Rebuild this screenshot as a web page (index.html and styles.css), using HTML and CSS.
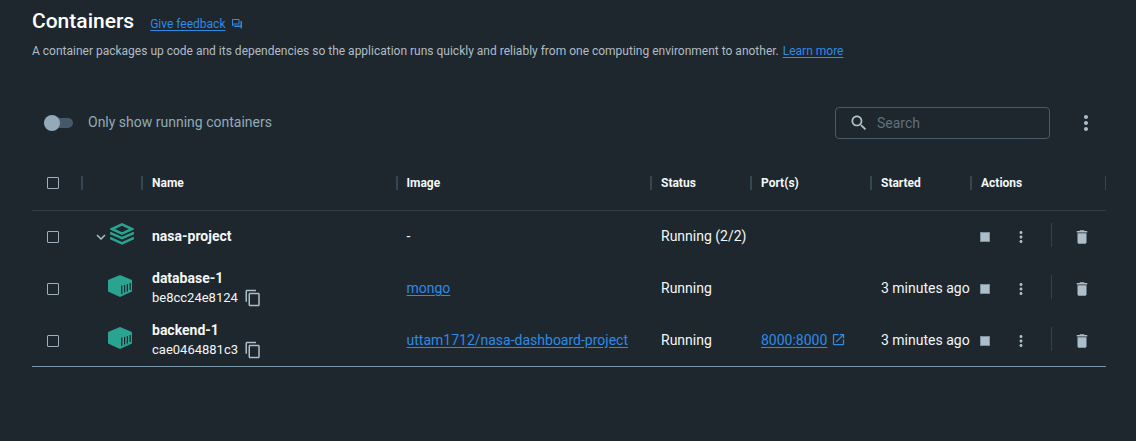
FILE: index.html
```html
<!DOCTYPE html>
<html lang="en">
<head>
<meta charset="utf-8">
<title>Containers</title>
<link rel="stylesheet" href="styles.css">
</head>
<body>
<svg class="sprite" aria-hidden="true">
  <symbol id="i-more" viewBox="0 0 24 24"><path d="M12 8c1.1 0 2-.9 2-2s-.9-2-2-2-2 .9-2 2 .9 2 2 2zm0 2c-1.100 0-2 .9-2 2s.9 2 2 2 2-.9 2-2-.9-2-2-2zm0 6c-1.100 0-2 .9-2 2s.9 2 2 2 2-.9 2-2-.9-2-2-2z"/></symbol>
  <symbol id="i-trash" viewBox="0 0 24 24"><path d="M6 19c0 1.100.9 2 2 2h8c1.100 0 2-.9 2-2V7H6v12zM19 4h-3.500l-1-1h-5l-1 1H5v2h14V4z"/></symbol>
  <symbol id="i-copy" viewBox="0 0 24 24"><path d="M16 1H4c-1.100 0-2 .9-2 2v14h2V3h12V1zm3 4H8c-1.100 0-2 .9-2 2v14c0 1.100.9 2 2 2h11c1.100 0 2-.9 2-2V7c0-1.100-.9-2-2-2zm0 16H8V7h11v14z"/></symbol>
  <symbol id="i-cube" viewBox="0 0 24 22"><path fill="currentColor" d="M12 0 24 5v11.500L12 22 0 16.500V5z"/><path class="slots" d="M13.800 10.500v8.500M16.600 10v7.500M19.400 9v7.500M22.200 8v7"/></symbol>
</svg>
<main class="page">
  <header class="heading">
    <h1 class="title">Containers</h1>
    <a class="link feedback" href="#feedback"><span class="underlined">Give feedback</span>
      <svg class="icon-feedback" viewBox="0 0 24 24" aria-hidden="true"><path d="M15 4v7H5.170L4 12.170V4h11m1-2H3c-.55 0-1 .45-1 1v14l4-4h10c.55 0 1-.45 1-1V3c0-.55-.45-1-1-1zm5 4h-2v9H6v2c0 .55.45 1 1 1h11l4 4V7c0-.55-.45-1-1-1z"/></svg>
    </a>
  </header>
  <p class="intro">A container packages up code and its dependencies so the application runs quickly and reliably from one computing environment to another. <a class="link underlined" href="#learn">Learn more</a></p>

  <div class="toolbar">
    <label class="toggle"><input class="switch" type="checkbox" role="switch"><span class="toggle-text">Only show running containers</span></label>
    <div class="search">
      <svg class="icon-search" viewBox="0 0 24 24" aria-hidden="true"><path d="M15.500 14h-.79l-.28-.27C15.410 12.590 16 11.110 16 9.500 16 5.910 13.090 3 9.500 3S3 5.910 3 9.500 5.910 16 9.500 16c1.610 0 3.090-.59 4.230-1.570l.27.28v.79l5 4.990L20.490 19l-4.990-5zm-6 0C7.010 14 5 11.990 5 9.500S7.010 5 9.500 5 14 7.010 14 9.500 11.990 14 9.500 14z"/></svg>
      <input class="search-input" type="search" placeholder="Search" aria-label="Search">
    </div>
    <button class="icon-button more" type="button" aria-label="Table options"><svg class="icon-more-large"><use href="#i-more"/></svg></button>
  </div>

  <table class="table">
    <colgroup><col class="col-check"><col class="col-icon"><col><col><col class="col-status"><col class="col-ports"><col class="col-started"><col class="col-actions"></colgroup>
    <thead>
      <tr>
        <th><input class="box" type="checkbox" aria-label="Select all"></th>
        <th></th><th>Name</th><th>Image</th><th>Status</th><th>Port(s)</th><th>Started</th><th>Actions</th>
      </tr>
    </thead>
    <tbody>
      <tr>
        <td><input class="box" type="checkbox" aria-label="Select nasa-project"></td>
        <td><div class="kind">
          <button class="icon-button" type="button" aria-label="Collapse"><svg class="icon-chevron" viewBox="0 0 10 6"><path d="M1 1l4 4 4-4"/></svg></button>
          <svg class="icon-stack" viewBox="0 0 24 22" aria-hidden="true"><path d="M12 1.400 22 6 12 10.600 2 6z"/><path d="M0 9.800 12 15.200l12-5.400M0 14.900 12 20.300l12-5.400"/></svg>
        </div></td>
        <td><div class="name">nasa-project</div></td>
        <td>-</td>
        <td>Running (2/2)</td>
        <td></td>
        <td></td>
        <td><div class="actions">
          <button class="icon-button" type="button" aria-label="Stop"><span class="stop"></span></button>
          <button class="icon-button" type="button" aria-label="More"><svg class="icon-action"><use href="#i-more"/></svg></button>
          <span class="divider"></span>
          <button class="icon-button" type="button" aria-label="Delete"><svg class="icon-trash"><use href="#i-trash"/></svg></button>
        </div></td>
      </tr>
      <tr>
        <td><input class="box" type="checkbox" aria-label="Select database-1"></td>
        <td><div class="kind"><svg class="icon-cube" aria-hidden="true"><use href="#i-cube"/></svg></div></td>
        <td><div class="name">database-1</div><div class="id">be8cc24e8124<button class="icon-button" type="button" aria-label="Copy ID"><svg class="icon-copy"><use href="#i-copy"/></svg></button></div></td>
        <td><a class="link underlined" href="#mongo">mongo</a></td>
        <td>Running</td>
        <td></td>
        <td>3 minutes ago</td>
        <td><div class="actions">
          <button class="icon-button" type="button" aria-label="Stop"><span class="stop"></span></button>
          <button class="icon-button" type="button" aria-label="More"><svg class="icon-action"><use href="#i-more"/></svg></button>
          <span class="divider"></span>
          <button class="icon-button" type="button" aria-label="Delete"><svg class="icon-trash"><use href="#i-trash"/></svg></button>
        </div></td>
      </tr>
      <tr>
        <td><input class="box" type="checkbox" aria-label="Select backend-1"></td>
        <td><div class="kind"><svg class="icon-cube" aria-hidden="true"><use href="#i-cube"/></svg></div></td>
        <td><div class="name">backend-1</div><div class="id">cae0464881c3<button class="icon-button" type="button" aria-label="Copy ID"><svg class="icon-copy"><use href="#i-copy"/></svg></button></div></td>
        <td><a class="link underlined" href="#project">uttam1712/nasa-dashboard-project</a></td>
        <td>Running</td>
        <td><a class="link port" href="#port"><span class="underlined">8000:8000</span><svg class="icon-open" viewBox="0 0 24 24" aria-hidden="true"><path d="M19 19H5V5h7V3H5c-1.110 0-2 .9-2 2v14c0 1.100.89 2 2 2h14c1.100 0 2-.9 2-2v-7h-2v7zM14 3v2h3.590l-9.830 9.830 1.410 1.410L19 6.410V10h2V3h-7z"/></svg></a></td>
        <td>3 minutes ago</td>
        <td><div class="actions">
          <button class="icon-button" type="button" aria-label="Stop"><span class="stop"></span></button>
          <button class="icon-button" type="button" aria-label="More"><svg class="icon-action"><use href="#i-more"/></svg></button>
          <span class="divider"></span>
          <button class="icon-button" type="button" aria-label="Delete"><svg class="icon-trash"><use href="#i-trash"/></svg></button>
        </div></td>
      </tr>
    </tbody>
  </table>
</main>
</body>
</html>
```

FILE: styles.css
```css
* { box-sizing: border-box; }
body {
  margin: 0;
  background: #1d272d;
  color: #f4f6f8;
  font: 14px/20px Roboto, "Liberation Sans", sans-serif;
}
.sprite { position: absolute; width: 0; height: 0; }
.page { padding: 8px 30px 32px 32px; }
svg { display: block; fill: currentColor; }

.heading { display: flex; align-items: center; gap: 16px; }
.title { margin: 0; font-size: 21px; line-height: 26px; font-weight: 500; color: #fff; }
.link { color: #2f8ae6; text-decoration: none; }
.underlined { text-decoration: underline; text-underline-offset: 2px; }
.feedback { display: flex; align-items: center; gap: 6px; padding-top: 6px; font-size: 12px; }
.icon-feedback { width: 12px; height: 12px; }
.intro { margin: 7px 0 0; font-size: 12px; line-height: 20px; color: #b1bcc6; }
.intro .link { margin-left: 1px; }

.toolbar { display: flex; align-items: center; margin-top: 46px; height: 32px; }
.toggle { display: flex; align-items: center; gap: 15px; margin-right: auto; padding-left: 12px; color: #94aab8; }
.toggle-text { padding-bottom: 2px; }
.switch {
  appearance: none;
  position: relative;
  display: flex;
  align-items: center;
  width: 29px;
  height: 16px;
  margin: 0;
}
.switch::before {
  content: "";
  width: 29px;
  height: 10px;
  border-radius: 5px;
  background: #46596b;
}
.switch::after {
  content: "";
  position: absolute;
  left: 0;
  width: 16px;
  height: 16px;
  border-radius: 50%;
  background: #94aab9;
}
.search {
  display: flex;
  align-items: center;
  gap: 8px;
  width: 215px;
  height: 32px;
  padding: 0 13px;
  border: 1px solid #465b6b;
  border-radius: 4px;
  color: #b4c2cd;
}
.icon-search { flex: none; width: 20px; height: 20px; }
.search-input {
  flex: 1;
  min-width: 0;
  padding: 0;
  border: 0;
  outline: 0;
  background: none;
  color: #f4f6f8;
  font: inherit;
}
.search-input::placeholder { color: #61717d; }
.icon-button { display: block; padding: 0; border: 0; background: none; color: #adbecb; }
.more { margin: 0 8px 0 24px; }
.icon-more-large { width: 24px; height: 24px; }

.table { width: 100%; margin-top: 16px; border-collapse: separate; border-spacing: 0; table-layout: fixed; }
.col-check { width: 51px; }
.col-icon { width: 60px; }
.col-status, .col-started { width: 100px; }
.col-ports { width: 120px; }
.col-actions { width: 134px; }
th {
  height: 56px;
  padding: 0 9px;
  border-bottom: 1px solid #323f46;
  background: linear-gradient(#344753, #344753) no-repeat right center / 2px 14px;
  font-size: 12px;
  font-weight: 700;
  text-align: left;
}
th:last-child { background-size: 1px 14px; }
td { height: 52px; padding: 0 0 2px 9px; overflow: hidden; white-space: nowrap; }
th:first-child, td:first-child { padding: 0 0 0 15px; }
tbody tr:last-child td { border-bottom: 1px solid #7c97aa; }
.box {
  appearance: none;
  display: block;
  width: 12px;
  height: 12px;
  margin: 0;
  border: 1px solid #9cb0be;
  border-radius: 1px;
}
.kind { display: flex; align-items: center; padding-bottom: 4px; padding-left: 4px; color: #2aa391; }
.kind .icon-button { padding-top: 5px; }
.icon-chevron { width: 10px; height: 6px; fill: none; stroke: currentColor; stroke-width: 1.500; }
.icon-stack { width: 24px; height: 22px; margin-left: 4px; fill: none; stroke: currentColor; stroke-width: 2.500; }
.icon-cube { width: 24px; height: 22px; margin-left: 12px; }
.slots { fill: none; stroke: #1d272d; stroke-width: 1.200; }
.name { font-weight: 700; }
.id { display: flex; align-items: center; gap: 6px; font-size: 13px; }
.icon-copy { width: 18px; height: 18px; }
.port { display: flex; align-items: center; gap: 4px; }
.icon-open { width: 15px; height: 15px; }
td:last-child { padding: 0 0 0 8px; }
.actions { display: flex; align-items: center; }
.stop { display: block; width: 10px; height: 10px; border: 1px solid #7f919e; background: #adbecb; }
.icon-action { width: 18px; height: 18px; margin-left: 22px; }
.divider { width: 1px; height: 24px; margin: 0 21px 4px; background: #34424a; }
.icon-trash { width: 18px; height: 18px; }
```
